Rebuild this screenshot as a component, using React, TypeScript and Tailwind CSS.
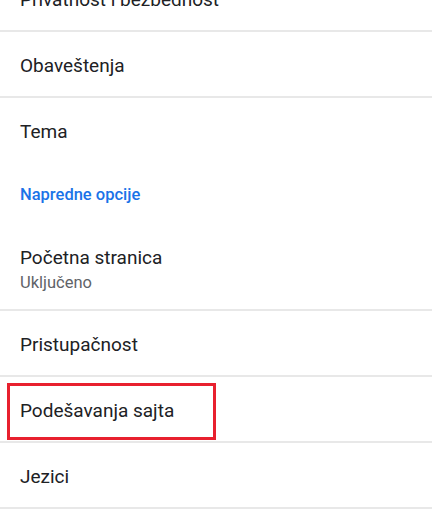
import React from "react";

type Row = { title: string; highlighted?: boolean };

const SettingsRow: React.FC<Row & { className?: string }> = ({
  title,
  highlighted,
  className = "",
}) => (
  <div
    className={`relative flex h-[66px] items-center border-b-2 border-[#e8e8e8] px-5 pt-[4px] ${className}`}
  >
    <span className="text-[19px] leading-[26px] text-[#202124]">{title}</span>
    {highlighted && (
      <div className="absolute left-[7px] top-[6px] h-[57px] w-[209px] border-[3px] border-[#e8202e]" />
    )}
  </div>
);

export default function App() {
  return (
    <div className="h-[525px] w-[432px] overflow-hidden bg-white font-['Roboto',sans-serif]">
      <SettingsRow title="Privatnost i bezbednost" className="-mt-[34px]" />
      <SettingsRow title="Obaveštenja" />
      <div className="flex h-[64px] items-center px-5 pt-[4px]">
        <span className="text-[19px] leading-[26px] text-[#202124]">Tema</span>
      </div>

      {/* section header */}
      <div className="px-5 pt-[22px]">
        <span className="block text-[16.5px] font-medium leading-[22px] text-[#1a73e8]">
          Napredne opcije
        </span>
      </div>

      <div className="flex flex-col border-b-2 border-[#e8e8e8] px-5 pb-[15px] pt-[39px]">
        <span className="text-[19px] leading-[26px] text-[#202124]">
          Početna stranica
        </span>
        <span className="mt-[1px] text-[16.5px] leading-[22px] text-[#5f6368]">
          Uključeno
        </span>
      </div>
      <SettingsRow title="Pristupačnost" />
      <SettingsRow title="Podešavanja sajta" highlighted />
      <SettingsRow title="Jezici" />
    </div>
  );
}
